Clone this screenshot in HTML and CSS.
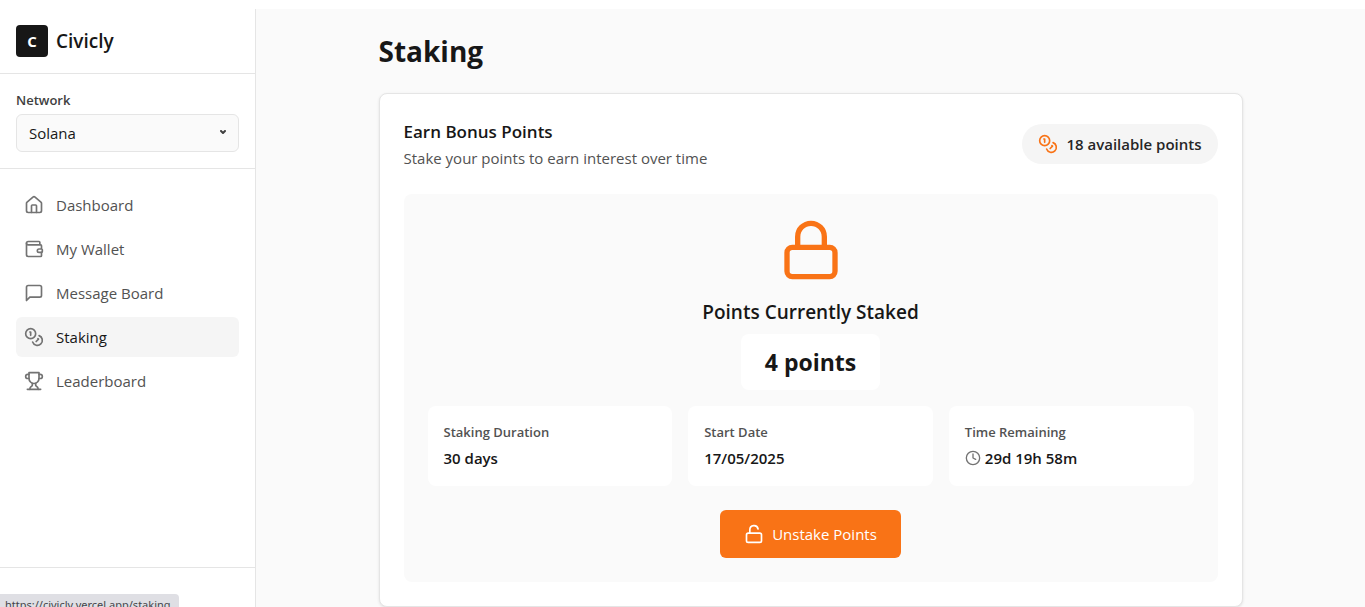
FILE: index.html
```html
<!DOCTYPE html>
<html lang="en">
<head>
<meta charset="utf-8">
<meta name="viewport" content="width=device-width, initial-scale=1">
<title>Civicly – Staking</title>
<link rel="stylesheet" href="styles.css">
</head>
<body>
<svg class="sprite" aria-hidden="true">
  <symbol id="coins" viewBox="0 0 24 24"><circle cx="8" cy="8" r="6"/><path d="M18.09 10.37A6 6 0 1 1 10.34 18"/><path d="M7 6h1v4"/><path d="m16.71 13.88.7.71-2.82 2.82"/></symbol>
</svg>
<div class="shell">
  <aside class="sidebar">
    <div class="brand">
      <span class="brand-mark">C</span>
      <span class="brand-name">Civicly</span>
    </div>
    <div class="network">
      <label class="network-label" for="network">Network</label>
      <div class="select-wrap">
        <select class="network-select" id="network"><option>Solana</option></select>
        <svg class="caret" viewBox="0 0 6 4"><path d="M1 1l2 2 2-2"/></svg>
      </div>
    </div>
    <nav class="nav">
      <a class="nav-link" href="#dashboard">
        <svg class="icon" viewBox="0 0 24 24"><path d="M15 21v-8a1 1 0 0 0-1-1h-4a1 1 0 0 0-1 1v8"/><path d="M3 10a2 2 0 0 1 .709-1.528l7-5.999a2 2 0 0 1 2.582 0l7 5.999A2 2 0 0 1 21 10v9a2 2 0 0 1-2 2H5a2 2 0 0 1-2-2z"/></svg>
        Dashboard</a>
      <a class="nav-link" href="#wallet">
        <svg class="icon" viewBox="0 0 24 24"><path d="M19 7V4a1 1 0 0 0-1-1H5a2 2 0 0 0 0 4h15a1 1 0 0 1 1 1v4h-3a2 2 0 0 0 0 4h3a1 1 0 0 0 1-1v-2a1 1 0 0 0-1-1"/><path d="M3 5v14a2 2 0 0 0 2 2h15a1 1 0 0 0 1-1v-4"/></svg>
        My Wallet</a>
      <a class="nav-link" href="#messages">
        <svg class="icon" viewBox="0 0 24 24"><path d="M21 15a2 2 0 0 1-2 2H7l-4 4V5a2 2 0 0 1 2-2h14a2 2 0 0 1 2 2z"/></svg>
        Message Board</a>
      <a class="nav-link active" href="#staking" aria-current="page">
        <svg class="icon"><use href="#coins"/></svg>
        Staking</a>
      <a class="nav-link" href="#leaderboard">
        <svg class="icon" viewBox="0 0 24 24"><path d="M6 9H4.500a2.500 2.500 0 0 1 0-5H6"/><path d="M18 9h1.500a2.500 2.500 0 0 0 0-5H18"/><path d="M4 22h16"/><path d="M10 14.660V17c0 .55-.47.98-.97 1.210C7.850 18.750 7 20.240 7 22"/><path d="M14 14.660V17c0 .55.47.98.97 1.210C16.150 18.750 17 20.240 17 22"/><path d="M18 2H6v7a6 6 0 0 0 12 0V2Z"/></svg>
        Leaderboard</a>
    </nav>
    <div class="sidebar-footer"></div>
  </aside>

  <main class="main">
    <div class="content">
      <h1 class="page-title">Staking</h1>
      <section class="card">
        <header class="card-header">
          <div>
            <h2 class="card-title">Earn Bonus Points</h2>
            <p class="card-text">Stake your points to earn interest over time</p>
          </div>
          <div class="balance"><svg class="icon"><use href="#coins"/></svg>18 available points</div>
        </header>
        <div class="panel">
          <svg class="lock" viewBox="0 0 24 24"><rect width="18" height="11" x="3" y="11" rx="2"/><path d="M7 11V7a5 5 0 0 1 10 0v4"/></svg>
          <h3 class="panel-title">Points Currently Staked</h3>
          <p class="amount">4 points</p>
          <dl class="stats">
            <div class="stat"><dt class="stat-label">Staking Duration</dt><dd class="stat-value">30 days</dd></div>
            <div class="stat"><dt class="stat-label">Start Date</dt><dd class="stat-value">17/05/2025</dd></div>
            <div class="stat"><dt class="stat-label">Time Remaining</dt><dd class="stat-value"><svg class="clock" viewBox="0 0 24 24"><circle cx="12" cy="12" r="10"/><path d="M12 6v6l4 2"/></svg>29d 19h 58m</dd></div>
          </dl>
          <button class="unstake" type="button"><svg class="icon" viewBox="0 0 24 24"><rect width="18" height="11" x="3" y="11" rx="2"/><path d="M7 11V7a5 5 0 0 1 9.900-1"/></svg>Unstake Points</button>
        </div>
      </section>
    </div>
  </main>
</div>
<div class="status">https://civicly.vercel.app/staking</div>
</body>
</html>
```
FILE: styles.css
```css
* { box-sizing: border-box; margin: 0; padding: 0; }

body {
  height: 100vh;
  padding-top: 9px;
  overflow: hidden;
  background: #fff;
  color: #171717;
  font: 15px/24px "Open Sans", "Noto Sans", sans-serif;
}

svg {
  flex: none;
  fill: none;
  stroke: currentColor;
  stroke-width: 2;
  stroke-linecap: round;
  stroke-linejoin: round;
}
.sprite { display: none; }
.icon { width: 20px; height: 20px; }

.shell { display: flex; height: 100%; }

.sidebar {
  display: flex;
  flex: none;
  flex-direction: column;
  width: 256px;
  border-right: 1px solid #e5e5e5;
}
.brand {
  display: flex;
  align-items: center;
  gap: 8px;
  padding: 16px;
  border-bottom: 1px solid #e5e5e5;
}
.brand-mark {
  display: grid;
  place-items: center;
  width: 32px;
  height: 32px;
  border-radius: 4px;
  background: #171717;
  color: #fff;
  font-weight: 700;
}
.brand-name { font-size: 19px; font-weight: 600; line-height: 28px; }

.network { padding: 16px; border-bottom: 1px solid #e5e5e5; }
.network-label {
  display: block;
  margin-bottom: 4px;
  color: #404040;
  font-size: 13px;
  font-weight: 600;
  line-height: 20px;
}
.select-wrap { position: relative; }
.network-select {
  display: block;
  width: 100%;
  height: 38px;
  padding: 0 12px;
  appearance: none;
  border: 1px solid #e5e5e5;
  border-radius: 6px;
  background: #fafafa;
  color: #171717;
  font: inherit;
}
.caret {
  position: absolute;
  top: 16px;
  right: 13px;
  width: 6px;
  height: 4px;
  color: #404040;
  pointer-events: none;
}

.nav { display: flex; flex: 1; flex-direction: column; gap: 4px; padding: 16px; }
.nav-link {
  display: flex;
  align-items: center;
  gap: 12px;
  padding: 8px;
  border-radius: 6px;
  color: #525252;
  text-decoration: none;
}
.nav-link .icon { color: #737373; }
.nav-link.active { background: #f5f5f5; color: #171717; }
.sidebar-footer { height: 40px; border-top: 1px solid #e5e5e5; }

.main { flex: 1; padding: 24px 16px; background: #fafafa; }
.content { max-width: 864px; margin: 0 auto; }
.page-title { margin-bottom: 24px; font-size: 28px; font-weight: 700; line-height: 36px; }

.card {
  padding: 24px;
  border: 1px solid #e5e5e5;
  border-radius: 8px;
  background: #fff;
  box-shadow: 0 1px 3px rgba(0, 0, 0, .1);
}
.card-header { display: flex; align-items: center; justify-content: space-between; margin-bottom: 24px; }
.card-title { font-size: 17px; font-weight: 600; line-height: 28px; }
.card-text { color: #525252; }
.balance {
  display: flex;
  align-items: center;
  gap: 8px;
  padding: 8px 16px;
  border-radius: 20px;
  background: #f5f5f5;
  color: #262626;
  font-weight: 600;
}
.balance .icon { color: #f97316; }

.panel {
  display: flex;
  flex-direction: column;
  align-items: center;
  padding: 24px;
  border-radius: 8px;
  background: #fafafa;
}
.lock { width: 64px; height: 64px; margin-bottom: 16px; color: #f97316; }
.panel-title { margin-bottom: 8px; font-size: 19px; font-weight: 600; line-height: 28px; }
.amount {
  margin-bottom: 16px;
  padding: 12px 24px;
  border-radius: 8px;
  background: #fff;
  font-size: 23px;
  font-weight: 700;
  line-height: 32px;
}
.stats {
  display: grid;
  grid-template-columns: repeat(3, 1fr);
  gap: 16px;
  width: 100%;
  margin-bottom: 24px;
}
.stat { padding: 16px; border-radius: 8px; background: #fff; }
.stat-label { margin-bottom: 4px; color: #525252; font-size: 13px; font-weight: 600; line-height: 20px; }
.stat-value { display: flex; align-items: center; gap: 4px; font-weight: 600; }
.clock { width: 16px; height: 16px; color: #737373; }

.unstake {
  display: flex;
  align-items: center;
  gap: 8px;
  padding: 12px 24px;
  border: 0;
  border-radius: 6px;
  background: #f97316;
  color: #fff;
  font: inherit;
}

.status {
  position: fixed;
  bottom: -8px;
  left: 0;
  padding: 2px 8px 2px 5px;
  border-radius: 0 4px 0 0;
  background: #dfdfe4;
  color: #45454a;
  font-family: "Noto Sans", sans-serif;
  font-size: 11px;
  line-height: 17px;
}
```
